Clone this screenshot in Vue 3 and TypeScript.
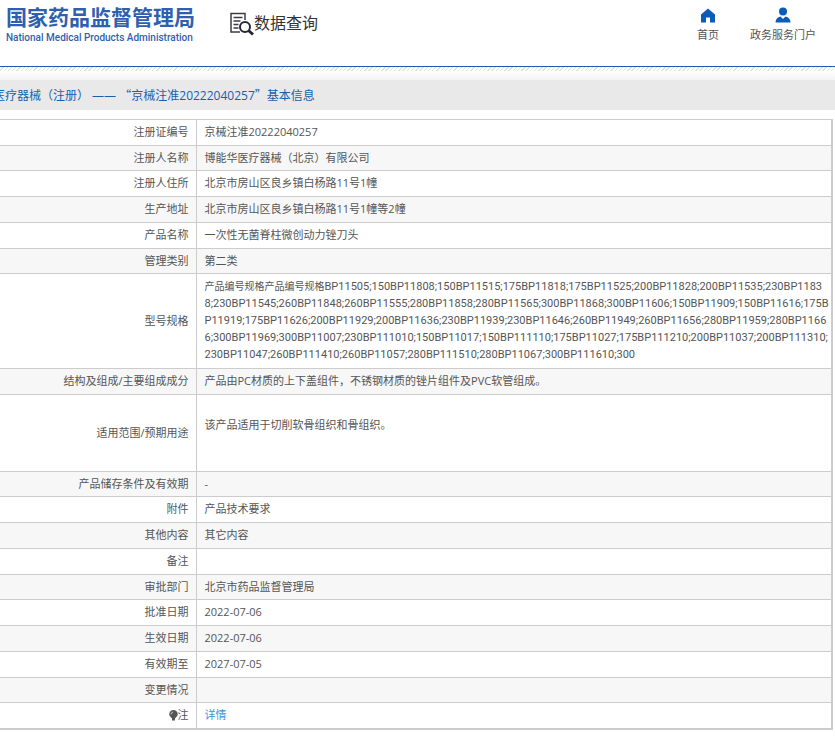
<script setup lang="ts">
interface Row {
  label: string
  value: string
  lead?: string
  kind?: 'spec' | 'scope' | 'note'
}

const spec = [
  'BP11505;150BP11808;150BP11515;175BP11818;175BP11525;200BP11828;200BP11535;230BP1183',
  '8;230BP11545;260BP11848;260BP11555;280BP11858;280BP11565;300BP11868;300BP11606;150BP11909;150BP11616;175B',
  'P11919;175BP11626;200BP11929;200BP11636;230BP11939;230BP11646;260BP11949;260BP11656;280BP11959;280BP1166',
  '6;300BP11969;300BP11007;230BP111010;150BP11017;150BP111110;175BP11027;175BP111210;200BP11037;200BP111310;',
  '230BP11047;260BP111410;260BP11057;280BP111510;280BP11067;300BP111610;300',
].join('\n')

const rows: Row[] = [
  { label: '注册证编号', value: '京械注准20222040257' },
  { label: '注册人名称', value: '博能华医疗器械（北京）有限公司' },
  { label: '注册人住所', value: '北京市房山区良乡镇白杨路11号1幢' },
  { label: '生产地址', value: '北京市房山区良乡镇白杨路11号1幢等2幢' },
  { label: '产品名称', value: '一次性无菌脊柱微创动力锉刀头' },
  { label: '管理类别', value: '第二类' },
  { label: '型号规格', lead: '产品编号规格产品编号规格', value: spec, kind: 'spec' },
  { label: '结构及组成/主要组成成分', value: '产品由PC材质的上下盖组件，不锈钢材质的锉片组件及PVC软管组成。' },
  { label: '适用范围/预期用途', value: '该产品适用于切削软骨组织和骨组织。', kind: 'scope' },
  { label: '产品储存条件及有效期', value: '-' },
  { label: '附件', value: '产品技术要求' },
  { label: '其他内容', value: '其它内容' },
  { label: '备注', value: '' },
  { label: '审批部门', value: '北京市药品监督管理局' },
  { label: '批准日期', value: '2022-07-06' },
  { label: '生效日期', value: '2022-07-06' },
  { label: '有效期至', value: '2027-07-05' },
  { label: '变更情况', value: '' },
  { label: '注', value: '详情', kind: 'note' },
]
</script>

<template>
  <div class="page">
    <header class="header">
      <a class="logo" href="#">
        <span class="logo-cn">国家药品监督管理局</span>
        <span class="logo-en">National Medical Products Administration</span>
      </a>
      <a class="search" href="#">
        <svg class="search-icon" viewBox="0 0 24 24" aria-hidden="true">
          <path d="M15 8V1.5H1V20h9" fill="none" stroke="#3c3c46" stroke-width="1.5" />
          <path d="M3.500 5.500h9M3.500 9h7M3.500 12.500h5M3.500 16h5" stroke="#3c3c46" stroke-width="1.500" />
          <circle cx="15" cy="15" r="5" fill="#fff" stroke="#25253a" stroke-width="2" />
          <path d="M18.500 18.500l4.500 4" stroke="#25253a" stroke-width="3" />
        </svg>
        <span>数据查询</span>
      </a>
      <nav class="nav">
        <a href="#">
          <svg viewBox="0 0 16 16" aria-hidden="true">
            <path d="M8 1.500L1 7.500v8h5v-5h4v5h5v-8z" fill="#0b5cb8" />
          </svg>
          <span>首页</span>
        </a>
        <a href="#">
          <svg viewBox="0 0 16 16" aria-hidden="true">
            <circle cx="8" cy="4.500" r="4" fill="#0b5cb8" />
            <path d="M.5 15.500c0-3.500 2-5.500 5-6L8 12l2.500-2.500c3 .5 5 2.500 5 6z" fill="#0b5cb8" />
          </svg>
          <span>政务服务门户</span>
        </a>
      </nav>
    </header>
    <div class="hatch"></div>
    <h1 class="title">医疗器械（注册） —— <span class="quote">“</span>京械注准20222040257<span class="quote">”</span>基本信息</h1>
    <table class="info">
      <tbody>
        <tr v-for="row in rows" :key="row.label" :class="row.kind">
          <th scope="row">
            <svg v-if="row.kind === 'note'" class="bulb" viewBox="0 0 9 11" aria-hidden="true">
              <path d="M4.500 0a4.300 4.300 0 0 0-4.300 4.300c0 2 1.800 2.700 2.800 4.200v2h3v-2c1-1.500 2.800-2.200 2.800-4.200A4.300 4.300 0 0 0 4.500 0z" fill="#555" />
              <path d="M2 4.500Q2 2.500 4 2" fill="none" stroke="#ccc" />
            </svg>{{ row.label }}
          </th>
          <td>
            <a v-if="row.kind === 'note'" href="#">{{ row.value }}</a>
            <template v-else><span v-if="row.lead" class="lead">{{ row.lead }}</span>{{ row.value }}</template>
          </td>
        </tr>
      </tbody>
    </table>
  </div>
</template>

<style>
body {
  margin: 0;
  background: #fff;
}
</style>

<style scoped>
.page {
  font-family: "Open Sans", "Noto Sans CJK SC", sans-serif;
  font-size: 11px;
  line-height: 17px;
  color: #555;
  overflow: hidden;
}

a {
  color: inherit;
  text-decoration: none;
}

.header {
  display: flex;
  align-items: flex-start;
  height: 66px;
  border-bottom: 1px solid #1b5dab;
}

.logo {
  display: flex;
  flex-direction: column;
  padding: 4px 0 0 6px;
  color: #2f5fae;
  white-space: nowrap;
}

.logo-cn {
  font-size: 21px;
  line-height: 26px;
  font-weight: 700;
}

.logo-en {
  font-family: Roboto, sans-serif;
  font-size: 10px;
  line-height: 16px;
  font-weight: 500;
}

.search {
  display: flex;
  align-items: flex-start;
  margin-left: 35px;
  padding-top: 12px;
  font-size: 16px;
  line-height: 22px;
  color: #333;
}

.search-icon {
  width: 24px;
  height: 24px;
}

.nav {
  display: flex;
  gap: 31px;
  margin-left: auto;
  padding: 7px 19px 0 0;
}

.nav a {
  display: flex;
  flex-direction: column;
  align-items: center;
  gap: 3px;
}

.nav svg {
  width: 16px;
  height: 16px;
}

.hatch {
  height: 13px;
  background:
    linear-gradient(to bottom, transparent 4px, #fff 4px, #f4f4f4),
    repeating-linear-gradient(135deg, #fff 0 2px, #dce3e6 2px 3px);
}

.title {
  margin: 0 0 9px;
  padding: 1px 0 0;
  text-indent: -7px;
  background: #e9e9e9;
  color: #1660ae;
  font-size: 12px;
  line-height: 28px;
  font-weight: 400;
  white-space: nowrap;
}

.quote {
  font-family: "Noto Sans CJK SC", sans-serif;
}

.info {
  width: calc(100% - 2px);
  border-collapse: collapse;
  border: solid #ccc;
  border-width: 1px 2px 2px 0;
}

th,
td {
  height: 23px;
  padding: 0 7px 2px 8px;
  border-bottom: 1px solid #ccc;
  text-align: left;
  font-weight: 400;
  word-break: break-all;
}

th {
  box-sizing: border-box;
  width: 196px;
  border-right: 1px solid #ccc;
  text-align: right;
}

tr:nth-child(even) {
  background: #f7f7f7;
}

tr:nth-child(4n + 2) td {
  height: 22px;
}

.spec td {
  height: 92px;
  padding-right: 0;
  font-family: Roboto, "Noto Sans CJK SC", sans-serif;
  white-space: pre-line;
}

.lead {
  font-size: 10px;
}

.scope td {
  height: 58px;
  padding-bottom: 18px;
}

.bulb {
  width: 9px;
  height: 11px;
  vertical-align: -2px;
}

.note a {
  color: #3d93d9;
}
</style>
